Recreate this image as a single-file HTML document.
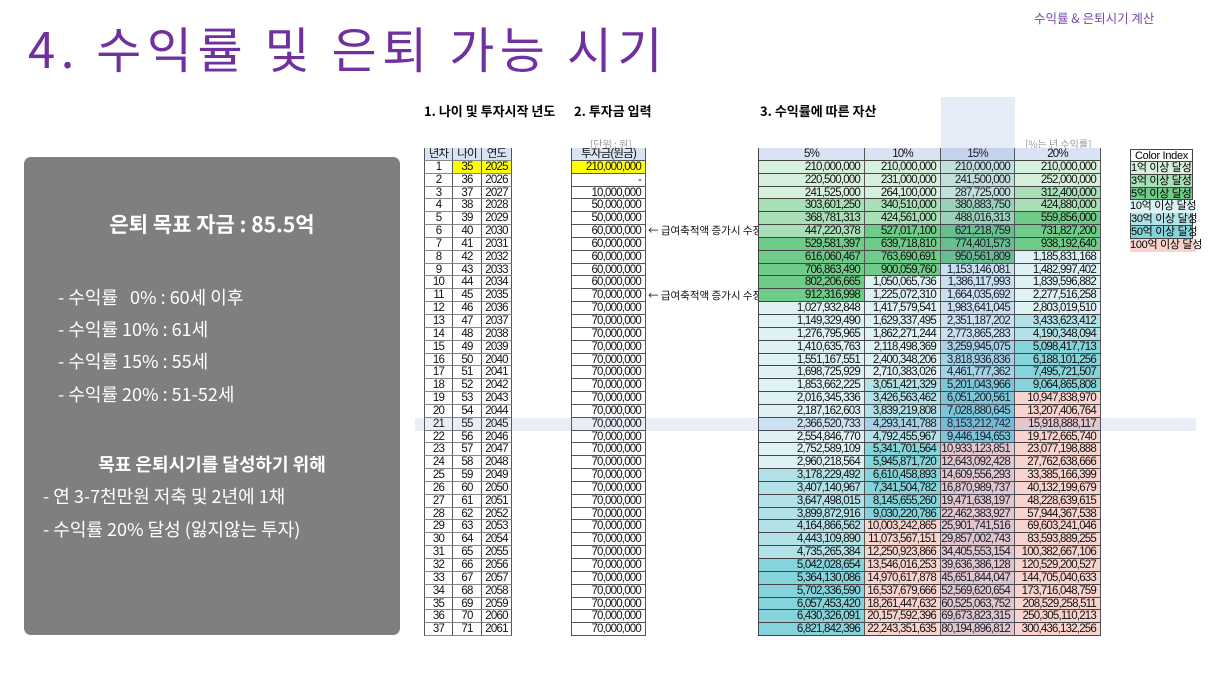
<!DOCTYPE html>
<html><head><meta charset="utf-8">
<style>
*{margin:0;padding:0;box-sizing:border-box}
body{width:1216px;height:684px;background:#fff;position:relative;overflow:hidden;font-family:"Liberation Sans","Noto Sans CJK KR",sans-serif}
.t{position:absolute;left:28px;top:14px;font-size:49px;color:#7030a0;font-family:"Noto Sans CJK KR",sans-serif;font-weight:400;letter-spacing:5.5px;line-height:68px;white-space:nowrap}
.tr{position:absolute;left:1034px;top:8px;font-size:12.5px;color:#7a4aa8;font-family:"Noto Sans CJK KR",sans-serif}
.panel{position:absolute;left:24px;top:157px;width:376px;height:478px;background:#7f7f7f;border-radius:7px;color:#fff;font-family:"Noto Sans CJK KR",sans-serif}
.panel div{position:absolute;white-space:nowrap}
.h{font-size:21px;font-weight:bold;left:0;right:0;text-align:center}
.li{font-size:18px;left:34px}
.sec{position:absolute;top:101px;font-size:13px;font-weight:bold;font-family:"Noto Sans CJK KR",sans-serif;color:#000}
.sm{position:absolute;font-size:10px;color:#999;font-family:"Noto Sans CJK KR",sans-serif}
.tb{position:absolute;font-size:11.5px;letter-spacing:-0.8px;color:#111;font-family:"Liberation Sans","Noto Sans CJK KR",sans-serif}
.tb .r{display:flex;height:12.85px;line-height:12.5px}
.tb i{font-style:normal;display:block;border-right:1px solid #555;border-bottom:1px solid #888;height:12.85px;overflow:hidden;white-space:nowrap}
.L{left:424px;top:148px}
.L i{text-align:center}
.L i:nth-child(1){width:29px;border-left:1px solid #555}
.L i:nth-child(2){width:29px}
.L i:nth-child(3){width:30px}
.M{left:571px;top:148px}
.M i{width:75px;text-align:right;padding-right:4px;border-left:1px solid #555;border-bottom:1px solid #555}
.R{left:758px;top:148px}
.R i{text-align:right;padding-right:4px;border-bottom:1px solid #444}
.R i:nth-child(1){width:107px;border-left:1px solid #444}
.R i:nth-child(2){width:76px}
.R i:nth-child(3){width:74px}
.R i:nth-child(4){width:86px}
.hd i{background:#dae3f3;text-align:center!important;padding:0!important}
.y{background:#ffff00}
.g1{background:#d6f0dc}.g2{background:#a9dfb6}.g3{background:#6fcb88}
.c1{background:#def2f5}.c2{background:#b2e2e8}.c3{background:#86d4db}.p{background:#f9d4cf}
.ann{position:absolute;left:648px;font-size:10.5px;font-family:"Noto Sans CJK KR",sans-serif;color:#111}
.CI{position:absolute;left:1130px;top:149px;font-size:11px;letter-spacing:-0.3px;font-family:"Liberation Sans","Noto Sans CJK KR",sans-serif}
.CI div{height:12.85px;line-height:12.5px;width:63px;white-space:nowrap;border:1px solid #444;border-top:none}
</style></head><body>
<div class="t">4. 수익률 및 은퇴 가능 시기</div>
<div class="tr">수익률 &amp; 은퇴시기 계산</div>

<div class="panel">
<div class="h" style="top:52px">은퇴 목표 자금 : 85.5억</div>
<div class="li" style="top:127px">- 수익률 &nbsp; 0% : 60세 이후</div>
<div class="li" style="top:159px">- 수익률 10% : 61세</div>
<div class="li" style="top:191px">- 수익률 15% : 55세</div>
<div class="li" style="top:224px">- 수익률 20% : 51-52세</div>
<div class="h" style="top:294px;font-size:18px">목표 은퇴시기를 달성하기 위해</div>
<div class="li" style="top:326px;left:19px">- 연 3-7천만원 저축 및 2년에 1채</div>
<div class="li" style="top:359px;left:19px">- 수익률 20% 달성 (잃지않는 투자)</div>
</div>

<div style="position:absolute;left:941px;top:97px;width:74px;height:52px;background:#e6ecf7"></div>

<div class="sec" style="left:424px">1. 나이 및 투자시작 년도</div>
<div class="sec" style="left:574px">2. 투자금 입력</div>
<div class="sec" style="left:760px">3. 수익률에 따른 자산</div>
<div class="sm" style="left:590px;top:136px">[단위 : 원]</div>
<div class="sm" style="left:1025px;top:136px">[%는 년 수익률]</div>

<div class="tb L">
<div class="r hd"><i>년차</i><i>나이</i><i>연도</i></div>
<div class="r"><i>1</i><i class="y">35</i><i class="y">2025</i></div>
<div class="r"><i>2</i><i>36</i><i>2026</i></div>
<div class="r"><i>3</i><i>37</i><i>2027</i></div>
<div class="r"><i>4</i><i>38</i><i>2028</i></div>
<div class="r"><i>5</i><i>39</i><i>2029</i></div>
<div class="r"><i>6</i><i>40</i><i>2030</i></div>
<div class="r"><i>7</i><i>41</i><i>2031</i></div>
<div class="r"><i>8</i><i>42</i><i>2032</i></div>
<div class="r"><i>9</i><i>43</i><i>2033</i></div>
<div class="r"><i>10</i><i>44</i><i>2034</i></div>
<div class="r"><i>11</i><i>45</i><i>2035</i></div>
<div class="r"><i>12</i><i>46</i><i>2036</i></div>
<div class="r"><i>13</i><i>47</i><i>2037</i></div>
<div class="r"><i>14</i><i>48</i><i>2038</i></div>
<div class="r"><i>15</i><i>49</i><i>2039</i></div>
<div class="r"><i>16</i><i>50</i><i>2040</i></div>
<div class="r"><i>17</i><i>51</i><i>2041</i></div>
<div class="r"><i>18</i><i>52</i><i>2042</i></div>
<div class="r"><i>19</i><i>53</i><i>2043</i></div>
<div class="r"><i>20</i><i>54</i><i>2044</i></div>
<div class="r"><i>21</i><i>55</i><i>2045</i></div>
<div class="r"><i>22</i><i>56</i><i>2046</i></div>
<div class="r"><i>23</i><i>57</i><i>2047</i></div>
<div class="r"><i>24</i><i>58</i><i>2048</i></div>
<div class="r"><i>25</i><i>59</i><i>2049</i></div>
<div class="r"><i>26</i><i>60</i><i>2050</i></div>
<div class="r"><i>27</i><i>61</i><i>2051</i></div>
<div class="r"><i>28</i><i>62</i><i>2052</i></div>
<div class="r"><i>29</i><i>63</i><i>2053</i></div>
<div class="r"><i>30</i><i>64</i><i>2054</i></div>
<div class="r"><i>31</i><i>65</i><i>2055</i></div>
<div class="r"><i>32</i><i>66</i><i>2056</i></div>
<div class="r"><i>33</i><i>67</i><i>2057</i></div>
<div class="r"><i>34</i><i>68</i><i>2058</i></div>
<div class="r"><i>35</i><i>69</i><i>2059</i></div>
<div class="r"><i>36</i><i>70</i><i>2060</i></div>
<div class="r"><i>37</i><i>71</i><i>2061</i></div>
</div>

<div class="tb M">
<div class="r hd"><i>투자금(원금)</i></div>
<div class="r"><i class="y">210,000,000</i></div>
<div class="r"><i>-</i></div>
<div class="r"><i>10,000,000</i></div>
<div class="r"><i>50,000,000</i></div>
<div class="r"><i>50,000,000</i></div>
<div class="r"><i>60,000,000</i></div>
<div class="r"><i>60,000,000</i></div>
<div class="r"><i>60,000,000</i></div>
<div class="r"><i>60,000,000</i></div>
<div class="r"><i>60,000,000</i></div>
<div class="r"><i>70,000,000</i></div>
<div class="r"><i>70,000,000</i></div>
<div class="r"><i>70,000,000</i></div>
<div class="r"><i>70,000,000</i></div>
<div class="r"><i>70,000,000</i></div>
<div class="r"><i>70,000,000</i></div>
<div class="r"><i>70,000,000</i></div>
<div class="r"><i>70,000,000</i></div>
<div class="r"><i>70,000,000</i></div>
<div class="r"><i>70,000,000</i></div>
<div class="r"><i>70,000,000</i></div>
<div class="r"><i>70,000,000</i></div>
<div class="r"><i>70,000,000</i></div>
<div class="r"><i>70,000,000</i></div>
<div class="r"><i>70,000,000</i></div>
<div class="r"><i>70,000,000</i></div>
<div class="r"><i>70,000,000</i></div>
<div class="r"><i>70,000,000</i></div>
<div class="r"><i>70,000,000</i></div>
<div class="r"><i>70,000,000</i></div>
<div class="r"><i>70,000,000</i></div>
<div class="r"><i>70,000,000</i></div>
<div class="r"><i>70,000,000</i></div>
<div class="r"><i>70,000,000</i></div>
<div class="r"><i>70,000,000</i></div>
<div class="r"><i>70,000,000</i></div>
<div class="r"><i>70,000,000</i></div>
</div>
<div class="ann" style="top:223px">← 급여축적액 증가시 수정</div>
<div class="ann" style="top:288px">← 급여축적액 증가시 수정</div>

<div class="tb R">
<div class="r hd"><i>5%</i><i>10%</i><i>15%</i><i>20%</i></div>
<div class="r"><i class="g1">210,000,000</i><i class="g1">210,000,000</i><i class="g1">210,000,000</i><i class="g1">210,000,000</i></div>
<div class="r"><i class="g1">220,500,000</i><i class="g1">231,000,000</i><i class="g1">241,500,000</i><i class="g1">252,000,000</i></div>
<div class="r"><i class="g1">241,525,000</i><i class="g1">264,100,000</i><i class="g1">287,725,000</i><i class="g2">312,400,000</i></div>
<div class="r"><i class="g2">303,601,250</i><i class="g2">340,510,000</i><i class="g2">380,883,750</i><i class="g2">424,880,000</i></div>
<div class="r"><i class="g2">368,781,313</i><i class="g2">424,561,000</i><i class="g2">488,016,313</i><i class="g3">559,856,000</i></div>
<div class="r"><i class="g2">447,220,378</i><i class="g3">527,017,100</i><i class="g3">621,218,759</i><i class="g3">731,827,200</i></div>
<div class="r"><i class="g3">529,581,397</i><i class="g3">639,718,810</i><i class="g3">774,401,573</i><i class="g3">938,192,640</i></div>
<div class="r"><i class="g3">616,060,467</i><i class="g3">763,690,691</i><i class="g3">950,561,809</i><i class="c1">1,185,831,168</i></div>
<div class="r"><i class="g3">706,863,490</i><i class="g3">900,059,760</i><i class="c1">1,153,146,081</i><i class="c1">1,482,997,402</i></div>
<div class="r"><i class="g3">802,206,665</i><i class="c1">1,050,065,736</i><i class="c1">1,386,117,993</i><i class="c1">1,839,596,882</i></div>
<div class="r"><i class="g3">912,316,998</i><i class="c1">1,225,072,310</i><i class="c1">1,664,035,692</i><i class="c1">2,277,516,258</i></div>
<div class="r"><i class="c1">1,027,932,848</i><i class="c1">1,417,579,541</i><i class="c1">1,983,641,045</i><i class="c1">2,803,019,510</i></div>
<div class="r"><i class="c1">1,149,329,490</i><i class="c1">1,629,337,495</i><i class="c1">2,351,187,202</i><i class="c2">3,433,623,412</i></div>
<div class="r"><i class="c1">1,276,795,965</i><i class="c1">1,862,271,244</i><i class="c1">2,773,865,283</i><i class="c2">4,190,348,094</i></div>
<div class="r"><i class="c1">1,410,635,763</i><i class="c1">2,118,498,369</i><i class="c2">3,259,945,075</i><i class="c3">5,098,417,713</i></div>
<div class="r"><i class="c1">1,551,167,551</i><i class="c1">2,400,348,206</i><i class="c2">3,818,936,836</i><i class="c3">6,188,101,256</i></div>
<div class="r"><i class="c1">1,698,725,929</i><i class="c1">2,710,383,026</i><i class="c2">4,461,777,362</i><i class="c3">7,495,721,507</i></div>
<div class="r"><i class="c1">1,853,662,225</i><i class="c2">3,051,421,329</i><i class="c3">5,201,043,966</i><i class="c3">9,064,865,808</i></div>
<div class="r"><i class="c1">2,016,345,336</i><i class="c2">3,426,563,462</i><i class="c3">6,051,200,561</i><i class="p">10,947,838,970</i></div>
<div class="r"><i class="c1">2,187,162,603</i><i class="c2">3,839,219,808</i><i class="c3">7,028,880,645</i><i class="p">13,207,406,764</i></div>
<div class="r"><i class="c1">2,366,520,733</i><i class="c2">4,293,141,788</i><i class="c3">8,153,212,742</i><i class="p">15,918,888,117</i></div>
<div class="r"><i class="c1">2,554,846,770</i><i class="c2">4,792,455,967</i><i class="c3">9,446,194,653</i><i class="p">19,172,665,740</i></div>
<div class="r"><i class="c1">2,752,589,109</i><i class="c3">5,341,701,564</i><i class="p">10,933,123,851</i><i class="p">23,077,198,888</i></div>
<div class="r"><i class="c1">2,960,218,564</i><i class="c3">5,945,871,720</i><i class="p">12,643,092,428</i><i class="p">27,762,638,666</i></div>
<div class="r"><i class="c2">3,178,229,492</i><i class="c3">6,610,458,893</i><i class="p">14,609,556,293</i><i class="p">33,385,166,399</i></div>
<div class="r"><i class="c2">3,407,140,967</i><i class="c3">7,341,504,782</i><i class="p">16,870,989,737</i><i class="p">40,132,199,679</i></div>
<div class="r"><i class="c2">3,647,498,015</i><i class="c3">8,145,655,260</i><i class="p">19,471,638,197</i><i class="p">48,228,639,615</i></div>
<div class="r"><i class="c2">3,899,872,916</i><i class="c3">9,030,220,786</i><i class="p">22,462,383,927</i><i class="p">57,944,367,538</i></div>
<div class="r"><i class="c2">4,164,866,562</i><i class="p">10,003,242,865</i><i class="p">25,901,741,516</i><i class="p">69,603,241,046</i></div>
<div class="r"><i class="c2">4,443,109,890</i><i class="p">11,073,567,151</i><i class="p">29,857,002,743</i><i class="p">83,593,889,255</i></div>
<div class="r"><i class="c2">4,735,265,384</i><i class="p">12,250,923,866</i><i class="p">34,405,553,154</i><i class="p">100,382,667,106</i></div>
<div class="r"><i class="c3">5,042,028,654</i><i class="p">13,546,016,253</i><i class="p">39,636,386,128</i><i class="p">120,529,200,527</i></div>
<div class="r"><i class="c3">5,364,130,086</i><i class="p">14,970,617,878</i><i class="p">45,651,844,047</i><i class="p">144,705,040,633</i></div>
<div class="r"><i class="c3">5,702,336,590</i><i class="p">16,537,679,666</i><i class="p">52,569,620,654</i><i class="p">173,716,048,759</i></div>
<div class="r"><i class="c3">6,057,453,420</i><i class="p">18,261,447,632</i><i class="p">60,525,063,752</i><i class="p">208,529,258,511</i></div>
<div class="r"><i class="c3">6,430,326,091</i><i class="p">20,157,592,396</i><i class="p">69,673,823,315</i><i class="p">250,305,110,213</i></div>
<div class="r"><i class="c3">6,821,842,396</i><i class="p">22,243,351,635</i><i class="p">80,194,896,812</i><i class="p">300,436,132,256</i></div>
</div>

<div style="position:absolute;left:941px;top:148px;width:74px;height:488px;background:rgba(70,110,200,0.13)"></div>
<div style="position:absolute;left:415px;top:418px;width:781px;height:13px;background:rgba(70,110,200,0.12)"></div>

<div class="CI">
<div style="border-top:1px solid #444;text-align:center">Color Index</div>
<div class="g1">1억 이상 달성</div>
<div class="g2">3억 이상 달성</div>
<div class="g3">5억 이상 달성</div>
<div class="c1" style="border:none">10억 이상 달성</div>
<div class="c2">30억 이상 달성</div>
<div class="c3">50억 이상 달성</div>
<div class="p" style="border:none;width:66px">100억 이상 달성</div>
</div>
</body></html>
